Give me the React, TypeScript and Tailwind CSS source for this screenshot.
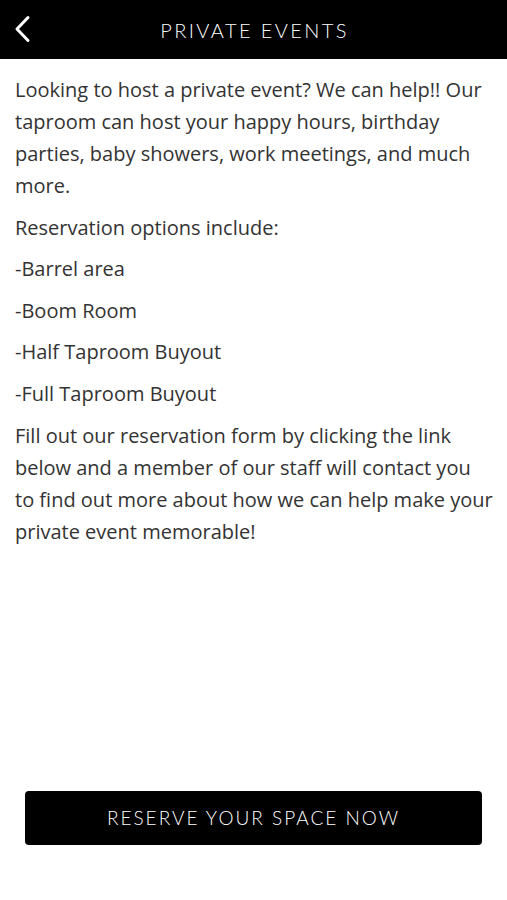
import React from 'react'

const options = ['-Barrel area', '-Boom Room', '-Half Taproom Buyout', '-Full Taproom Buyout']

export default function App() {
  return (
    <div className="flex min-h-[900px] w-[507px] flex-col bg-white" style={{ fontFamily: '"Open Sans", sans-serif' }}>
      {/* Header */}
      <div className="relative flex h-[59px] items-center justify-center bg-black">
        <button className="absolute left-[12px] top-[14px] text-white">
          <svg width="22" height="30" viewBox="0 0 22 30" fill="none" stroke="currentColor" strokeWidth="3" strokeLinecap="round" strokeLinejoin="round">
            <path d="M16 3.5 L5 15 L16 26.5" />
          </svg>
        </button>
        <h1 className="pl-[2px] text-[20px] font-light tracking-[2.4px] text-white" style={{ fontFamily: 'Lato, sans-serif' }}>
          PRIVATE EVENTS
        </h1>
      </div>

      {/* Content */}
      <div className="flex flex-col gap-[9.6px] pl-[15px] pr-[13px] pt-[15px] text-[20px] leading-[32px] text-[#333]">
        <p>
          Looking to host a private event? We can help!! Our taproom can host your happy hours, birthday parties, baby
          showers, work meetings, and much more.
        </p>
        <p>Reservation options include:</p>
        {options.map((o) => (
          <p key={o}>{o}</p>
        ))}
        <p>
          Fill out our reservation form by clicking the link below and a member of our staff will contact you to find out
          more about how we can help make your private event memorable!
        </p>
      </div>

      <div className="mt-auto px-[25px] pb-[55px]">
        <button
          className="flex h-[54px] w-full items-center justify-center rounded-[4px] bg-black text-[19px] font-light tracking-[2px] text-white"
          style={{ fontFamily: 'Lato, sans-serif' }}
        >
          RESERVE YOUR SPACE NOW
        </button>
      </div>
    </div>
  )
}
